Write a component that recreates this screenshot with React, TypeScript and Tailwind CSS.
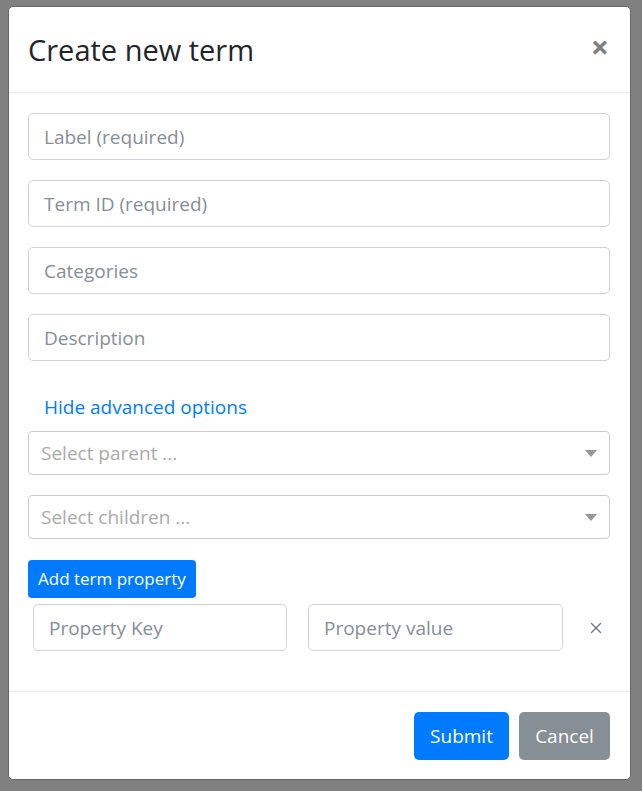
import { X } from "lucide-react";

const font = { fontFamily: '"Open Sans", "Noto Sans", sans-serif' };

function Field({ placeholder }: { placeholder: string }) {
  return (
    <input
      placeholder={placeholder}
      className="h-[47px] w-full rounded-[5px] border border-[#ced4da] bg-white px-[15px] text-[19px] text-[#495057] outline-none placeholder:text-[#868e96]"
    />
  );
}

function SelectBox({ placeholder }: { placeholder: string }) {
  return (
    <div className="flex h-[44px] w-full items-center justify-between rounded-[4px] border border-[#cccccc] bg-white pl-[12px] pr-[12px]">
      <span className="text-[19px] text-[#aaaaaa]">{placeholder}</span>
      <svg width="12" height="7" viewBox="0 0 12 7">
        <path d="M0 0 L12 0 L6 7 Z" fill="#999999" />
      </svg>
    </div>
  );
}

export default function App() {
  return (
    <div className="min-h-screen bg-[#808080] pl-[8px] pt-[6px]" style={font}>
      <div className="flex w-[623px] flex-col rounded-[5px] border border-[#666666] bg-white">
        {/* header */}
        <div className="flex h-[86px] items-start justify-between border-b border-[#e9ecef] pl-[19px] pr-[20px]">
          <h5 className="mt-[28px] text-[29px] font-medium leading-none text-[#212529]">
            Create new term
          </h5>
          <button className="mt-[24px] mr-[1px] text-[32px] font-bold leading-none text-black/50">
            ×
          </button>
        </div>

        {/* body */}
        <div className="flex flex-col pl-[19px] pr-[20px] pt-[20px] pb-[40px]">
          <div className="flex flex-col gap-[20px]">
            <Field placeholder="Label (required)" />
            <Field placeholder="Term ID (required)" />
            <Field placeholder="Categories" />
            <Field placeholder="Description" />
          </div>

          <div className="mt-[31px] mb-[9px] h-[30px] pl-[16px] text-[19px] leading-[30px] text-[#007bff]">
            Hide advanced options
          </div>

          <div className="flex flex-col gap-[20px]">
            <SelectBox placeholder="Select parent ..." />
            <SelectBox placeholder="Select children ..." />
          </div>

          <div className="mt-[21px]">
            <button className="h-[38px] rounded-[4px] bg-[#007bff] px-[10px] text-[17px] text-white">
              Add term property
            </button>
          </div>

          <div className="mt-[6px] flex items-center pl-[5px]">
            <div className="w-[254px]">
              <Field placeholder="Property Key" />
            </div>
            <div className="ml-[21px] w-[255px]">
              <Field placeholder="Property value" />
            </div>
            <X className="ml-[24px] text-[#6c757d]" size={18} strokeWidth={1.6} />
          </div>
        </div>

        {/* footer */}
        <div className="flex justify-end gap-[10px] border-t border-[#e9ecef] pt-[20px] pb-[19px] pl-[19px] pr-[20px]">
          <button className="h-[48px] w-[95px] rounded-[5px] bg-[#007bff] text-[19px] text-white">
            Submit
          </button>
          <button className="h-[48px] w-[91px] rounded-[5px] bg-[#868e96] text-[19px] text-white">
            Cancel
          </button>
        </div>
      </div>
    </div>
  );
}
